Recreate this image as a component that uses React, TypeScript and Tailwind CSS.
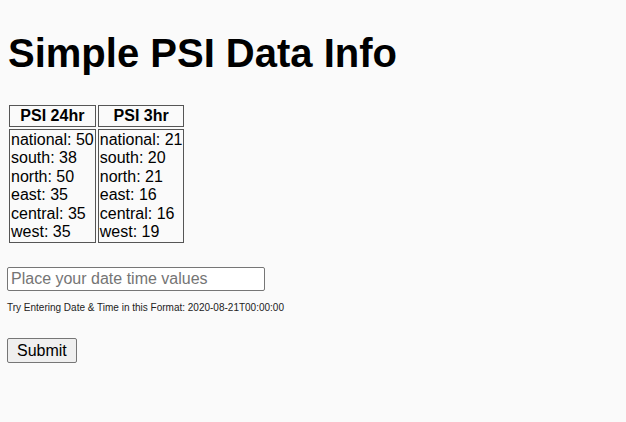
import React from "react";

const psi24 = [
  ["national", 50],
  ["south", 38],
  ["north", 50],
  ["east", 35],
  ["central", 35],
  ["west", 35],
];
const psi3 = [
  ["national", 21],
  ["south", 20],
  ["north", 21],
  ["east", 16],
  ["central", 16],
  ["west", 19],
];

export default function App() {
  return (
    <div className="min-h-screen bg-[#fafafa] py-2 pl-[7px] pr-2 font-['Liberation_Sans',Arial,sans-serif] text-black">
      <h1 className="mt-[22px] mb-[27px] pl-[1px] text-[40px] font-bold leading-[46px]">Simple PSI Data Info</h1>
      <table className="border-separate border-spacing-[2px]">
        <thead>
          <tr>
            <th className="border border-[#555] p-[1px] text-[16px] leading-[18px] font-bold">PSI 24hr</th>
            <th className="border border-[#555] p-[1px] text-[16px] leading-[18px] font-bold">PSI 3hr</th>
          </tr>
        </thead>
        <tbody>
          <tr>
            <td className="border border-[#555] p-[1px] text-[16px] leading-[18.4px]">
              {psi24.map(([k, v]) => (
                <div key={k as string}>
                  {k}: {v}
                </div>
              ))}
            </td>
            <td className="border border-[#555] p-[1px] text-[16px] leading-[18.4px]">
              {psi3.map(([k, v]) => (
                <div key={k as string}>
                  {k}: {v}
                </div>
              ))}
            </td>
          </tr>
        </tbody>
      </table>
      <div className="mt-[22px]">
        <input
          type="text"
          placeholder="Place your date time values"
          className="h-[24px] w-[258px] rounded-[2px] border border-[#767676] bg-white px-[3px] py-[2px] text-[16px] leading-[18px] placeholder:text-[#757575] outline-none"
        />
      </div>
      <p className="mt-[11px] text-[10px] leading-[12px] text-[#222]">
        Try Entering Date &amp; Time in this Format: 2020-08-21T00:00:00
      </p>
      <div className="mt-[24px]">
        <button className="h-[25px] rounded-[2px] border border-[#767676] bg-[#efefef] px-[9px] text-[16px] leading-[18px]">
          Submit
        </button>
      </div>
    </div>
  );
}
